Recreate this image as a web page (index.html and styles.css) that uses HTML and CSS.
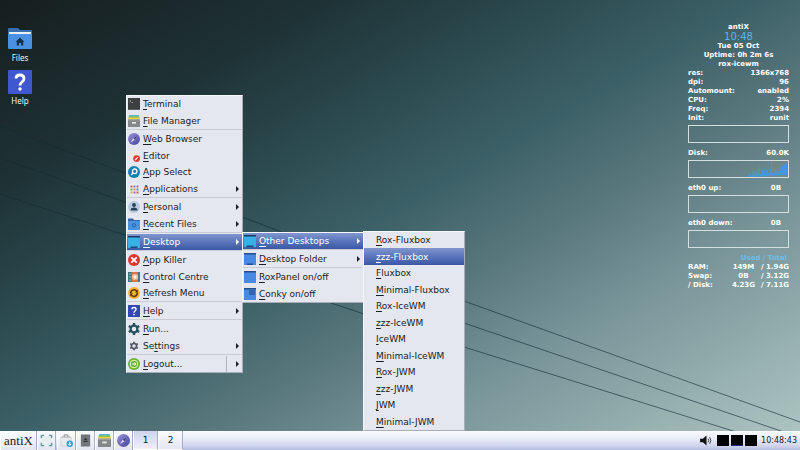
FILE: index.html
```html
<!DOCTYPE html>
<html lang="en">
	<head>
		<meta charset="UTF-8">
		<title>antiX</title>
		<link rel="stylesheet" href="styles.css">
	</head>
	<body>
		<!-- icon sprites -->
		<svg class="sprites" aria-hidden="true">
			<defs>
				<linearGradient id="gCompass" x1="0" y1="0" x2="1" y2="1">
					<stop offset="0" stop-color="#9a90dc"/>
					<stop offset="1" stop-color="#43479a"/>
				</linearGradient>
				<symbol id="iTerminal" viewBox="0 0 12 12">
					<rect width="12" height="12" fill="#3d3f41"/>
					<rect y="11" width="12" height="1" fill="#5d5f60"/>
					<path d="M1.5 2l1.5 1-1.5 1M3.5 4.5h1.5" stroke="#b5b8b8" stroke-width=".7" fill="none"/>
				</symbol>
				<symbol id="iDrawer" viewBox="0 0 12 12">
					<rect x="1" width="10" height="2" fill="#58b8dc"/>
					<rect x=".5" y="1.3" width="11" height="2" fill="#8cc152"/>
					<rect x=".5" y="2.7" width="11" height="1.8" fill="#f2d43d"/>
					<rect y="4.3" width="12" height="7.7" fill="#85888a"/>
					<rect y="4.3" width="12" height="1" fill="#a3a6a7"/>
					<rect x="4" y="7" width="4" height="1.6" fill="#eceded"/>
				</symbol>
				<symbol id="iCompass" viewBox="0 0 12 12">
					<circle cx="6" cy="6" r="6" fill="url(#gCompass)"/>
					<path d="M9.5 2.5L6.7 6.7 2.5 9.5 5.3 5.3z" fill="#e3e1f6"/>
					<path d="M9.5 2.5L6.7 6.7 5.3 5.3z" fill="#38377b"/>
				</symbol>
				<symbol id="iEditor" viewBox="0 0 12 12">
					<path d="M1 1l8-.5 1 10-8 1z" fill="#ebe8e4"/>
					<circle cx="8.600" cy="8.600" r="3.400" fill="#e03a35"/>
					<path d="M7.200 10l2.700-2.800" stroke="#fff" stroke-width="1.200"/>
				</symbol>
				<symbol id="iSearch" viewBox="0 0 12 12">
					<circle cx="6" cy="6" r="6" fill="#0d82b0"/>
					<circle cx="6.7" cy="5.3" r="2.3" fill="none" stroke="#fff" stroke-width="1.3"/>
					<path d="M5 7L3.2 9" stroke="#fff" stroke-width="1.4"/>
				</symbol>
				<symbol id="iApps" viewBox="0 0 12 12">
					<rect width="12" height="12" rx="5" fill="#edeeee"/>
					<path d="M2.500 2.500h2v2h-2z" fill="#d65b5b"/><path d="M5.500 2.500h2v2h-2z" fill="#5788c9"/><path d="M8.500 2.500h2v2h-2z" fill="#b060a8"/>
					<path d="M2.500 5.500h2v2h-2z" fill="#6da95c"/><path d="M5.500 5.500h2v2h-2z" fill="#df874a"/><path d="M8.500 5.500h2v2h-2z" fill="#578cb8"/>
					<path d="M2.500 8.500h2v2h-2z" fill="#d9a848"/><path d="M5.500 8.500h2v2h-2z" fill="#826eb4"/><path d="M8.500 8.500h2v2h-2z" fill="#cf554e"/>
				</symbol>
				<symbol id="iUser" viewBox="0 0 12 12">
					<circle cx="6" cy="6" r="6" fill="#b7cce1"/>
					<circle cx="6" cy="4" r="1.9" fill="#2a4155"/>
					<path d="M2.5 9.5q0-3 3.5-3t3.5 3z" fill="#2a4155"/>
				</symbol>
				<symbol id="iRecent" viewBox="0 0 12 12">
					<path d="M0 .5h5l1 1.5h6v9.5H0z" fill="#3567aa"/>
					<rect y="3" width="12" height="9" fill="#4b93df"/>
					<circle cx="6" cy="7.3" r="1.7" fill="none" stroke="#2366b1"/>
				</symbol>
				<symbol id="iScreen" viewBox="0 0 12 12">
					<rect width="12" height="12" fill="#36b0e6"/>
					<rect width="12" height="1.5" fill="#1b3b66"/>
					<rect x="2.5" y="10.5" width="7" height="1.5" fill="#184b78"/>
				</symbol>
				<symbol id="iPane" viewBox="0 0 12 12">
					<rect width="12" height="12" fill="#4789e3"/>
					<rect width="12" height="1.5" fill="#2a4f8d"/>
				</symbol>
				<symbol id="iPaneDock" viewBox="0 0 12 12">
					<use href="#iPane"/>
					<rect x="3" y="10.5" width="6" height="1.5" fill="#244d92"/>
				</symbol>
				<symbol id="iPaneConky" viewBox="0 0 12 12">
					<use href="#iPane"/>
					<rect x="5" y="2" width="6" height="5" fill="#3565ae"/>
				</symbol>
				<symbol id="iKill" viewBox="0 0 12 12">
					<circle cx="6" cy="6" r="6" fill="#e0342f"/>
					<path d="M3.3 3.3l5.4 5.4M8.7 3.3L3.3 8.7" stroke="#fff" stroke-width="1.8"/>
				</symbol>
				<symbol id="iControl" viewBox="0 0 12 12">
					<rect y="1" width="12" height="10" fill="#d8743e"/>
					<rect y="1" width="3.5" height="10" fill="#3f7381"/>
					<rect x="10" y="1" width="2" height="10" fill="#477786"/>
					<path d="M1 3h2M1 6h2M1 9h2" stroke="#91bfc7"/>
					<circle cx="7" cy="6" r="3.2" fill="#f2b98c"/>
					<circle cx="7" cy="6" r="1.5" fill="#fff5ea"/>
				</symbol>
				<symbol id="iRefresh" viewBox="0 0 12 12">
					<circle cx="6" cy="6" r="6" fill="#f3b72f"/>
					<path d="M2.7 6.5A3.4 3.4 0 0 1 9 4.5M9.3 5.5A3.4 3.4 0 0 1 3 7.7" fill="none" stroke="#5b3612" stroke-width="1.5"/>
					<path d="M9.800 2.500v3H7zM2.200 9.500v-3H5z" fill="#5b3612"/>
				</symbol>
				<symbol id="iHelp" viewBox="0 0 24 24">
					<rect width="24" height="24" rx="1" fill="#4058cf"/>
					<path d="M8 8.5Q8 5 12 5t4 3.5q0 2-2 3.5t-2 3.5" fill="none" stroke="#fff" stroke-width="2.8"/>
					<circle cx="12" cy="19" r="1.7" fill="#fff"/>
				</symbol>
				<symbol id="iHelpDark" viewBox="0 0 24 24">
					<rect width="24" height="24" rx="1" fill="#3445b4"/>
					<path d="M8 8.5Q8 5 12 5t4 3.5q0 2-2 3.5t-2 3.5" fill="none" stroke="#fff" stroke-width="2.8"/>
					<circle cx="12" cy="19" r="1.7" fill="#fff"/>
				</symbol>
				<symbol id="iGear" viewBox="0 0 12 12">
					<circle cx="6" cy="6" r="3.4" fill="none" stroke="currentColor" stroke-width="2.2"/>
					<path d="M6 0v2.5M6 9.5V12M.8 3l2.200 1.300M9 7.700L11.200 9M.8 9L3 7.700M9 4.300L11.200 3" stroke="currentColor" stroke-width="2.4"/>
				</symbol>
				<symbol id="iLogout" viewBox="0 0 12 12">
					<circle cx="6" cy="6" r="6" fill="#6cb42c"/>
					<circle cx="6" cy="6" r="3.8" fill="none" stroke="#e4f4d2" stroke-width="1"/>
					<path d="M4 6h3.5M6.3 4.5L7.9 6 6.3 7.5" fill="none" stroke="#fff"/>
				</symbol>
				<symbol id="iFolderHome" viewBox="0 0 24 24">
					<path d="M0 2q0-1 1-1h9l2 2h11q1 0 1 1v10H0z" fill="#3a6cb0"/>
					<rect x="1" y="5" width="22" height="4" fill="#e9f1fa"/>
					<rect y="7" width="24" height="15" rx="1" fill="#4a91e2"/>
					<path d="M12 10.5L7.5 15h1.3v3.5H11V16h2v2.5h2.200V15h1.300z" fill="#13314f"/>
				</symbol>
				<symbol id="iShowDesk" viewBox="0 0 14 14">
					<rect x="2" y="2" width="10" height="10" fill="#e7eeee"/>
					<path d="M1.500 4.500v-3h3M9.500 1.500h3v3M12.500 9.500v3h-3M4.500 12.500h-3v-3" fill="none" stroke="#5f9aa2" stroke-width="1.500"/>
				</symbol>
				<symbol id="iPackage" viewBox="0 0 14 14">
					<rect x="1" y="3" width="11" height="10" rx="1" fill="#e9eaeb" stroke="#c2c6ca" stroke-width=".6"/>
					<path d="M4.5 3V1h4v2" fill="none" stroke="#7c8389"/>
					<path d="M2 3.500h9" stroke="#8b9095" stroke-dasharray="1 1"/>
					<circle cx="10.500" cy="10.500" r="3.500" fill="#3ba3d2"/>
					<path d="M10.500 8.500v3.500M9 10.700l1.500 1.500 1.500-1.500" fill="none" stroke="#fff"/>
				</symbol>
				<symbol id="iDisk" viewBox="0 0 14 14">
					<rect x="2" y=".5" width="10" height="13" fill="#73777b"/>
					<path d="M7 4L4.700 6.800h4.600zM4.700 7.500h4.600v1H4.700z" fill="#303336"/>
				</symbol>
				<symbol id="iSpeaker" viewBox="0 0 14 12">
					<path d="M0 4h3l4-3.5v11L3 8H0z" fill="#111"/>
					<path d="M8.700 4q1.400 2 0 4M10.500 2.500q2.500 3.500 0 7" fill="none" stroke="#333" stroke-width="1"/>
				</symbol>
			</defs>
		</svg>

		<main class="desktop">
			<svg class="wires" viewBox="0 0 800 450" preserveAspectRatio="none" aria-hidden="true">
				<path d="M0 126L242 217 464 301 800 422"/>
				<path d="M0 158L125 202 464 323 778 430 830 448"/>
				<path d="M0 194L125 235 464 347 730 430 790 449"/>
			</svg>

			<div class="shortcuts">
				<a class="shortcut" href="#files"><svg><use href="#iFolderHome"/></svg>Files</a>
				<a class="shortcut" href="#help"><svg><use href="#iHelp"/></svg>Help</a>
			</div>

			<!-- system monitor -->
			<aside class="conky">
				<div class="conkyHead">
					<div>antiX</div>
					<div class="conkyTime">10:48</div>
					<div>Tue 05 Oct</div>
					<div>Uptime: 0h 2m 6s</div>
					<div>rox-icewm</div>
				</div>
				<div class="stat"><span>res:</span><span>1366x768</span></div>
				<div class="stat"><span>dpi:</span><span>96</span></div>
				<div class="stat"><span>Automount:</span><span>enabled</span></div>
				<div class="stat"><span>CPU:</span><span>2%</span></div>
				<div class="stat"><span>Freq:</span><span>2394</span></div>
				<div class="stat"><span>Init:</span><span>runit</span></div>
				<div class="graph"></div>
				<div class="stat"><span>Disk:</span><span>60.0K</span></div>
				<div class="graph">
					<svg viewBox="0 0 98 16" preserveAspectRatio="none">
						<path d="M59 16v-3h1v-1h1v2h2v-4h1v4h1v-3h1v2h1v-4h1v4h1v-7h1v7h2v-4h1v3h1v-5h1v5h1v-3h2v3h2v-4h1v-10h1v14h1v-5h1v4h1v-3h1v3h1v-5h1v4h2v-4h1v4h1v-5h1v5h1v-6h1v4h1v-5h1v11z"/>
					</svg>
				</div>
				<div class="stat net"><span>eth0 up:</span><span>0B</span></div>
				<div class="graph"></div>
				<div class="stat net"><span>eth0 down:</span><span>0B</span></div>
				<div class="graph"></div>
				<table class="usage">
					<thead>
						<tr><th></th><th colspan="2">Used / Total</th></tr>
					</thead>
					<tbody>
						<tr><th>RAM:</th><td>149M</td><td>/ 1.94G</td></tr>
						<tr><th>Swap:</th><td>0B</td><td>/ 3.12G</td></tr>
						<tr><th>/ Disk:</th><td>4.23G</td><td>/ 7.11G</td></tr>
					</tbody>
				</table>
			</aside>

			<!-- root menu -->
			<nav class="menu rootMenu">
				<ul>
					<li><button><svg><use href="#iTerminal"/></svg><span><u>T</u>erminal</span></button></li>
					<li><button><svg><use href="#iDrawer"/></svg><span><u>F</u>ile Manager</span></button></li>
				</ul>
				<ul>
					<li><button><svg><use href="#iCompass"/></svg><span><u>W</u>eb Browser</span></button></li>
					<li><button><svg><use href="#iEditor"/></svg><span><u>E</u>ditor</span></button></li>
					<li><button><svg><use href="#iSearch"/></svg><span><u>A</u>pp Select</span></button></li>
					<li><button class="more"><svg><use href="#iApps"/></svg><span><u>A</u>pplications</span></button></li>
				</ul>
				<ul>
					<li><button class="more"><svg><use href="#iUser"/></svg><span><u>P</u>ersonal</span></button></li>
					<li><button class="more"><svg><use href="#iRecent"/></svg><span><u>R</u>ecent Files</span></button></li>
				</ul>
				<ul>
					<li>
						<button class="more active"><svg><use href="#iScreen"/></svg><span><u>D</u>esktop</span></button>
						<div class="menu subMenu desktopMenu">
							<ul>
								<li>
									<button class="more active"><svg><use href="#iScreen"/></svg><span><u>O</u>ther Desktops</span></button>
									<div class="menu subMenu plainMenu">
										<ul>
											<li><button><span><u>R</u>ox-Fluxbox</span></button></li>
											<li><button class="active"><span><u>z</u>zz-Fluxbox</span></button></li>
											<li><button><span><u>F</u>luxbox</span></button></li>
											<li><button><span><u>M</u>inimal-Fluxbox</span></button></li>
											<li><button><span><u>R</u>ox-IceWM</span></button></li>
											<li><button><span><u>z</u>zz-IceWM</span></button></li>
											<li><button><span><u>I</u>ceWM</span></button></li>
											<li><button><span><u>M</u>inimal-IceWM</span></button></li>
											<li><button><span><u>R</u>ox-JWM</span></button></li>
											<li><button><span><u>z</u>zz-JWM</span></button></li>
											<li><button><span><u>J</u>WM</span></button></li>
											<li><button><span><u>M</u>inimal-JWM</span></button></li>
										</ul>
									</div>
								</li>
							</ul>
							<ul>
								<li><button class="more"><svg><use href="#iPaneDock"/></svg><span><u>D</u>esktop Folder</span></button></li>
							</ul>
							<ul>
								<li><button><svg><use href="#iPane"/></svg><span><u>R</u>oxPanel on/off</span></button></li>
								<li><button><svg><use href="#iPaneConky"/></svg><span><u>C</u>onky on/off</span></button></li>
							</ul>
						</div>
					</li>
				</ul>
				<ul>
					<li><button><svg><use href="#iKill"/></svg><span><u>A</u>pp Killer</span></button></li>
					<li><button><svg><use href="#iControl"/></svg><span><u>C</u>ontrol Centre</span></button></li>
					<li><button><svg><use href="#iRefresh"/></svg><span><u>R</u>efresh Menu</span></button></li>
				</ul>
				<ul>
					<li><button class="more"><svg><use href="#iHelpDark"/></svg><span><u>H</u>elp</span></button></li>
				</ul>
				<ul>
					<li><button><svg class="run"><use href="#iGear"/></svg><span><u>R</u>un...</span></button></li>
					<li><button class="more"><svg class="settings" viewBox="-2 -2 16 16"><use href="#iGear" width="12" height="12"/></svg><span>Se<u>t</u>tings</span></button></li>
				</ul>
				<ul>
					<li><button class="more split"><svg><use href="#iLogout"/></svg><span><u>L</u>ogout...</span></button></li>
				</ul>
			</nav>
		</main>

		<footer class="taskbar">
			<button class="start">antiX</button>
			<button class="launch" aria-label="Show desktop"><svg><use href="#iShowDesk"/></svg></button>
			<div class="launchers">
				<button class="launch" aria-label="Package installer"><svg><use href="#iPackage"/></svg></button>
				<button class="launch" aria-label="Drives"><svg><use href="#iDisk"/></svg></button>
				<button class="launch" aria-label="File manager"><svg><use href="#iDrawer"/></svg></button>
				<button class="launch" aria-label="Web browser"><svg><use href="#iCompass"/></svg></button>
			</div>
			<div class="spaces">
				<button class="space current">1</button>
				<button class="space">2</button>
			</div>
			<div class="tray">
				<svg class="speaker"><use href="#iSpeaker"/></svg>
				<div class="meters"><i></i><i class="net"></i><i></i></div>
				<time>10:48:43</time>
			</div>
		</footer>
	</body>
</html>
```
FILE: styles.css
```css
* {
	box-sizing: border-box;
}
body {
	margin: 0;
	height: 100vh;
	display: flex;
	flex-direction: column;
	overflow: hidden;
	font: 9px/16px "DejaVu Sans", sans-serif;
	color: #1c1c22;
	background: linear-gradient(150deg, #161e1e 0%, #1e3135 20%, #28454a 32%, #3c6067 48%, #5d7b80 62%, #78959a 73%, #98b1b1 88%, #b0c7c4 100%);
}
ul {
	margin: 0;
	padding: 0;
}
li {
	list-style: none;
}
button {
	border: 0;
	padding: 0;
	background: none;
	color: inherit;
	font: inherit;
}
svg {
	display: block;
	flex: none;
}
.sprites {
	position: absolute;
	width: 0;
	height: 0;
}

/* desktop */
.desktop {
	position: relative;
	flex: 1;
	min-height: 0;
	display: flex;
	justify-content: space-between;
	align-items: flex-start;
}
.wires {
	position: absolute;
	top: 0;
	left: 0;
	width: 100vw;
	height: 100vh;
	fill: none;
	stroke: #122c33;
	stroke-opacity: 0.6;
}
.shortcuts {
	position: relative;
	display: flex;
	flex-direction: column;
	gap: 5px;
	padding: 27px 0 0 4px;
}
.shortcut {
	width: 32px;
	display: flex;
	flex-direction: column;
	align-items: center;
	font: 8px/14px "Noto Sans", sans-serif;
	color: #f2f4f4;
	text-decoration: none;
}
.shortcut svg {
	width: 24px;
	height: 24px;
}

/* system monitor */
.conky {
	position: relative;
	width: 101px;
	margin: 23px 11px 0 0;
	font-size: 7px;
	font-weight: bold;
	line-height: 9px;
	color: #fff;
}
.conkyHead {
	text-align: center;
}
.conkyTime {
	font-size: 9px;
	font-weight: normal;
	line-height: 10px;
	color: #5fb4e4;
}
.stat {
	display: flex;
	justify-content: space-between;
}
.stat.net {
	padding-right: 8px;
}
.graph {
	height: 18px;
	margin: 2px 0 6px;
	border: 1px solid #d5dfe0;
}
.graph svg {
	width: 100%;
	height: 100%;
	fill: #4a97d8;
}
.usage {
	width: 100%;
	border-collapse: collapse;
}
.usage th,
.usage td {
	padding: 0;
	text-align: left;
}
.usage td {
	text-align: center;
}
.usage td:last-child {
	width: 28px;
	text-align: right;
	white-space: nowrap;
}
.usage thead th {
	padding-right: 2px;
	text-align: right;
	color: #6cbdea;
}

/* menus */
.menu {
	position: absolute;
	border: 1px solid #f6f7fb;
	border-right-color: #a9adba;
	border-bottom-color: #a9adba;
	background-color: #e4e6f0;
}
.rootMenu {
	left: 126px;
	top: 95px;
	width: 117px;
}
.subMenu {
	left: 100%;
	top: -2px;
	z-index: 1;
}
.desktopMenu {
	width: 122px;
}
.plainMenu {
	width: 102px;
}
.menu ul + ul {
	border-top: 1px solid #c9ccd6;
	padding-top: 1px;
}
.menu li {
	position: relative;
	height: 16px;
}
.menu li:nth-child(even) {
	height: 17px;
}
.menu button {
	display: flex;
	align-items: center;
	gap: 3px;
	width: 100%;
	height: 100%;
	padding: 0 3px 0 1px;
	color: #1c1c22;
	text-align: left;
	white-space: nowrap;
}
.menu svg {
	width: 12px;
	height: 12px;
}
.menu .active {
	color: #fff;
	background: linear-gradient(#8296cf, #5a75bb 50%, #3b58a5);
}
.menu .plainMenu button {
	padding-left: 12px;
}
.menu u {
	text-decoration-thickness: 1px;
	text-underline-offset: 2px;
}
.more:after {
	content: "";
	margin-left: auto;
	border: 3px solid transparent;
	border-left-color: currentColor;
	border-right: 0;
}
.split span {
	flex: 1;
	align-self: stretch;
	margin-right: 6px;
	border-right: 1px solid #b3b6c2;
}
.menu .run {
	color: #23505e;
}
.menu .settings {
	color: #555b66;
}

/* taskbar */
.taskbar {
	position: relative;
	z-index: 2;
	height: 19px;
	display: flex;
	align-items: stretch;
	background: linear-gradient(#fafbfe, #eceefa 35%, #d3d8ef 75%, #b6bee0);
}
.start,
.launch,
.space {
	border-right: 1px solid #a9aec6;
	border-left: 1px solid #fff;
	background: linear-gradient(#fbfcfe, #e3e6f2);
}
.start {
	width: 37px;
	font: 13px/18px "Liberation Serif", serif;
}
.launch {
	width: 19px;
	display: flex;
	align-items: center;
	justify-content: center;
}
.launch svg {
	width: 13px;
	height: 13px;
}
.launchers,
.spaces {
	display: flex;
}
.launchers {
	margin-left: 1px;
}
.space {
	width: 25px;
	border-bottom: 1px solid #fff;
}
.space.current {
	background: linear-gradient(#cdd4ec, #eef0fa);
}
.conky .conkyTime {
	font-size: 10px;
}
.tray {
	display: flex;
	align-items: center;
	gap: 4px;
	margin-left: auto;
	padding-right: 3px;
	font-size: 8px;
}
.speaker {
	width: 13px;
	height: 11px;
}
.meters {
	display: flex;
	gap: 2px;
}
.meters i {
	width: 12px;
	height: 11px;
	background-color: #000;
}
.meters .net {
	border-bottom: 1px solid #23237a;
}
```
